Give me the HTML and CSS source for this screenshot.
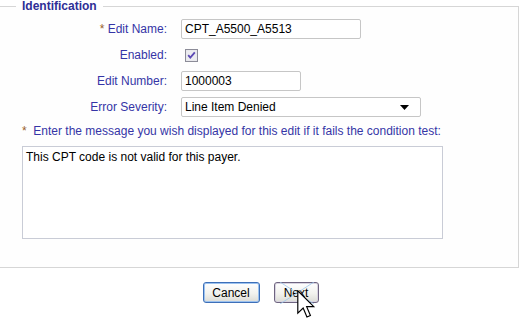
FILE: index.html
```html
<!DOCTYPE html>
<html>
<head>
<meta charset="utf-8">
<link rel="stylesheet" href="styles.css">
</head>
<body>
<fieldset class="ident">
  <legend class="ident-legend">Identification</legend>
  <div class="form-grid">
    <label class="lbl"><span class="req">*</span> Edit Name:</label>
    <div class="field"><input class="txt txt-name" type="text" value="CPT_A5500_A5513"></div>

    <label class="lbl">Enabled:</label>
    <div class="field">
      <span class="chk">
        <svg width="13" height="13" viewBox="0 0 13 13">
          <rect x="0.5" y="0.5" width="12" height="12" fill="#e6e6ea" stroke="#8c8c98"/>
          <rect x="1.5" y="1.5" width="10" height="10" fill="#ececf0"/>
          <path d="M3.2 6.2 L5.3 8.6 L9.8 3.4" fill="none" stroke="#5b48b4" stroke-width="1.8"/>
        </svg>
      </span>
    </div>

    <label class="lbl">Edit Number:</label>
    <div class="field"><input class="txt txt-num" type="text" value="1000003"></div>

    <label class="lbl">Error Severity:</label>
    <div class="field">
      <div class="sel">
        <span class="sel-text">Line Item Denied</span>
        <svg class="sel-arrow" width="9" height="5" viewBox="0 0 9 5"><path d="M0 0 H9 L4.5 5 Z" fill="#000"/></svg>
      </div>
    </div>
  </div>
  <p class="prompt"><span class="req">*</span>&nbsp; Enter the message you wish displayed for this edit if it fails the condition test:</p>
  <textarea class="msg">This CPT code is not valid for this payer.</textarea>
</fieldset>

<div class="actions">
  <button class="btn btn-cancel">Cancel</button>
  <button class="btn btn-next">Next
    <svg class="xlines" width="36" height="22" viewBox="0 0 36 22"><path d="M1 0 L35 22 M35 0 L1 22" stroke="#9cc8ec" stroke-width="1" opacity="0.8"/></svg>
  </button>
</div>

<svg class="cursor" width="19" height="29" viewBox="0 0 13 20">
  <path d="M0.5 0.5 L0.5 16 L4.2 12.4 L6.8 18.6 L9.2 17.6 L6.6 11.5 L11.5 11.5 Z" fill="#fff" stroke="#000" stroke-width="0.8" stroke-linejoin="miter"/>
</svg>
</body>
</html>
```

FILE: styles.css
```css
html, body {
  margin: 0;
  padding: 0;
  background: #ffffff;
}

body {
  font-family: "Liberation Sans", Arial, sans-serif;
  font-size: 12px;
  color: #000;
  width: 521px;
  height: 320px;
  overflow: hidden;
  position: relative;
}

.ident {
  margin: 0;
  width: 519px;
  box-sizing: border-box;
  border: 1px solid #d6d6d6;
  border-left: none;
  padding: 7px 0 28px 0;
  background: #fefefe;
}

.ident-legend {
  margin-left: 16px;
  padding: 0 6px;
  font-weight: bold;
  font-size: 12px;
  line-height: 12px;
  color: #2e2e96;
}

.form-grid {
  display: grid;
  grid-template-columns: 167px 1fr;
  column-gap: 14px;
  row-gap: 6px;
  align-items: center;
}

.lbl {
  text-align: right;
  color: #3535a6;
  line-height: 20px;
}

.req {
  color: #99602a;
}

.field {
  display: flex;
  align-items: center;
  height: 20px;
}

.txt {
  box-sizing: border-box;
  height: 20px;
  margin: 0;
  border: 1px solid #c6c6c6;
  border-radius: 2px;
  padding: 0 3px;
  font-family: "Liberation Sans", Arial, sans-serif;
  font-size: 12px;
  color: #000;
  background: #fff;
  outline: none;
}

.txt-name { width: 180px; }
.txt-num { width: 120px; }

.chk {
  display: flex;
  margin-left: 4px;
  margin-top: 1px;
}

.sel {
  box-sizing: border-box;
  width: 240px;
  height: 20px;
  border: 1px solid #c6c6c6;
  border-radius: 2px;
  display: flex;
  align-items: center;
  justify-content: space-between;
  padding: 0 11px 0 3px;
  background: #fff;
}

.sel-text {
  line-height: 18px;
}

.prompt {
  margin: 7px 0 0 22px;
  line-height: 14px;
  color: #3535a6;
}

.msg {
  display: block;
  box-sizing: border-box;
  margin: 8px 0 0 22px;
  width: 421px;
  height: 93px;
  border: 1px solid #c9ccd6;
  padding: 3px 3px;
  font-family: "Liberation Sans", Arial, sans-serif;
  font-size: 12px;
  line-height: 15px;
  color: #000;
  resize: none;
  outline: none;
  background: #fff;
}

.actions {
  display: flex;
  justify-content: center;
  gap: 14px;
  margin-top: 14px;
}

.btn {
  box-sizing: border-box;
  height: 21px;
  margin: 0;
  padding: 0;
  font-family: "Liberation Sans", Arial, sans-serif;
  font-size: 12px;
  color: #000;
  border-radius: 3px;
  background: linear-gradient(#ffffff 0%, #f2f2ee 55%, #dcdcd6 100%);
  position: relative;
}

.btn-cancel {
  width: 57px;
  border: 1px solid #3d6fb8;
  box-shadow: inset 0 0 0 1px #9cc2ef;
}

.btn-next {
  width: 45px;
  border: 1px solid #6e6480;
  box-shadow: inset 0 0 0 1px #d8d4e0;
}

.xlines {
  position: absolute;
  left: 4px;
  top: -1px;
  pointer-events: none;
}

.cursor {
  position: absolute;
  left: 297px;
  top: 290px;
}
```
